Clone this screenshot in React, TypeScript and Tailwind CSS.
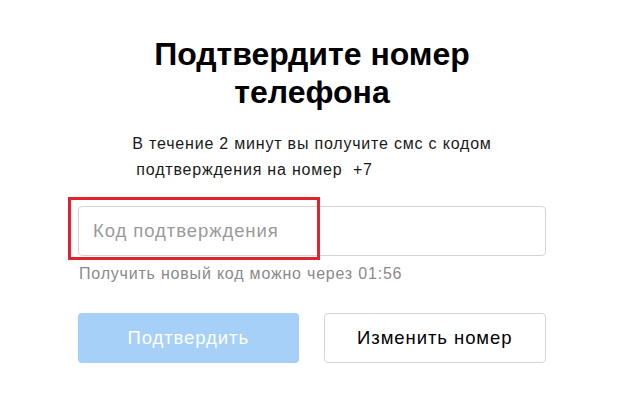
export default function App() {
  return (
    <div className="min-h-[407px] w-full bg-white font-['Liberation_Sans',Arial,sans-serif]">
      <div className="mx-auto w-[468px] pt-[35px]">
        <h1 className="text-center text-[32px] font-bold leading-[38px] text-black">
          Подтвердите номер
          <br />
          телефона
        </h1>

        <div className="mx-auto mt-[20px] w-fit text-[16px] leading-[26px] tracking-[0.05em] text-[#1a1a1a]">
          <p>В течение 2 минут вы получите смс с кодом</p>
          <p className="ml-[4px]">подтверждения на номер&nbsp; +7</p>
        </div>

        <div className="relative mt-[23px]">
          <input
            type="text"
            placeholder="Код подтверждения"
            className="h-[50px] w-full rounded-[4px] border border-[#d4d4d4] bg-white px-[14px] text-[18.5px] tracking-[0.05em] text-black outline-none placeholder:text-[#9a9a9a]"
          />
          {/* annotation frame */}
          <div className="pointer-events-none absolute left-[-10px] top-[-9px] h-[63px] w-[252px] border-[3px] border-[#e0232e]" />
        </div>

        <p className="mt-[8px] pl-[1px] text-[16px] leading-[20px] tracking-[0.05em] text-[#8a8a8a]">
          Получить новый код можно через 01:56
        </p>

        <div className="mt-[29px] flex gap-[25px]">
          <button className="h-[50px] flex-1 rounded-[4px] bg-[#a6d0f7] text-[18.5px] tracking-[0.05em] text-white">
            Подтвердить
          </button>
          <button className="h-[50px] flex-1 rounded-[4px] border border-[#d4d4d4] bg-white text-[18.5px] tracking-[0.05em] text-black">
            Изменить номер
          </button>
        </div>
      </div>
    </div>
  );
}
